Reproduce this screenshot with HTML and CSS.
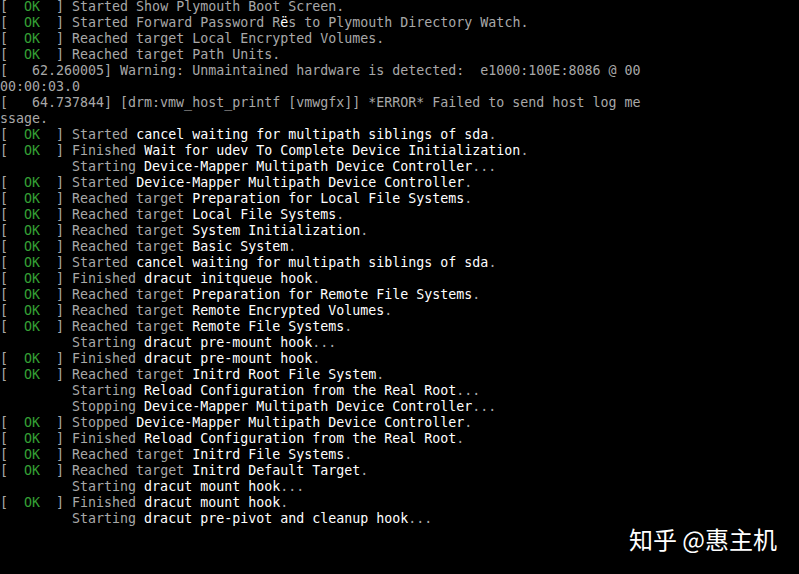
FILE: index.html
```html
<!DOCTYPE html>
<html>
<head>
<meta charset="utf-8">
<link rel="stylesheet" href="styles.css">
</head>
<body>
<div class="console">
<div class="line"><span class="g">[  </span><span class="ok">OK</span><span class="g">  ] Started Show Plymouth Boot Screen.</span></div>
<div class="line"><span class="g">[  </span><span class="ok">OK</span><span class="g">  ] Started Forward Password R</span><span class="w">ë</span><span class="g">s to Plymouth Directory Watch.</span></div>
<div class="line"><span class="g">[  </span><span class="ok">OK</span><span class="g">  ] Reached target Local Encrypted Volumes.</span></div>
<div class="line"><span class="g">[  </span><span class="ok">OK</span><span class="g">  ] Reached target Path Units.</span></div>
<div class="line"><span class="g">[   62.260005] Warning: Unmaintained hardware is detected:  e1000:100E:8086 @ 00</span></div>
<div class="line"><span class="g">00:00:03.0</span></div>
<div class="line"><span class="g">[   64.737844] [drm:vmw_host_printf [vmwgfx]] *ERROR* Failed to send host log me</span></div>
<div class="line"><span class="g">ssage.</span></div>
<div class="line"><span class="g">[  </span><span class="ok">OK</span><span class="g">  ] Started </span><span class="w">cancel waiting for multipath siblings of sda</span><span class="g">.</span></div>
<div class="line"><span class="g">[  </span><span class="ok">OK</span><span class="g">  ] Finished </span><span class="w">Wait for udev To Complete Device Initialization</span><span class="g">.</span></div>
<div class="line"><span class="g">         Starting </span><span class="w">Device-Mapper Multipath Device Controller</span><span class="g">...</span></div>
<div class="line"><span class="g">[  </span><span class="ok">OK</span><span class="g">  ] Started </span><span class="w">Device-Mapper Multipath Device Controller</span><span class="g">.</span></div>
<div class="line"><span class="g">[  </span><span class="ok">OK</span><span class="g">  ] Reached target </span><span class="w">Preparation for Local File Systems</span><span class="g">.</span></div>
<div class="line"><span class="g">[  </span><span class="ok">OK</span><span class="g">  ] Reached target </span><span class="w">Local File Systems</span><span class="g">.</span></div>
<div class="line"><span class="g">[  </span><span class="ok">OK</span><span class="g">  ] Reached target </span><span class="w">System Initialization</span><span class="g">.</span></div>
<div class="line"><span class="g">[  </span><span class="ok">OK</span><span class="g">  ] Reached target </span><span class="w">Basic System</span><span class="g">.</span></div>
<div class="line"><span class="g">[  </span><span class="ok">OK</span><span class="g">  ] Started </span><span class="w">cancel waiting for multipath siblings of sda</span><span class="g">.</span></div>
<div class="line"><span class="g">[  </span><span class="ok">OK</span><span class="g">  ] Finished </span><span class="w">dracut initqueue hook</span><span class="g">.</span></div>
<div class="line"><span class="g">[  </span><span class="ok">OK</span><span class="g">  ] Reached target </span><span class="w">Preparation for Remote File Systems</span><span class="g">.</span></div>
<div class="line"><span class="g">[  </span><span class="ok">OK</span><span class="g">  ] Reached target </span><span class="w">Remote Encrypted Volumes</span><span class="g">.</span></div>
<div class="line"><span class="g">[  </span><span class="ok">OK</span><span class="g">  ] Reached target </span><span class="w">Remote File Systems</span><span class="g">.</span></div>
<div class="line"><span class="g">         Starting </span><span class="w">dracut pre-mount hook</span><span class="g">...</span></div>
<div class="line"><span class="g">[  </span><span class="ok">OK</span><span class="g">  ] Finished </span><span class="w">dracut pre-mount hook</span><span class="g">.</span></div>
<div class="line"><span class="g">[  </span><span class="ok">OK</span><span class="g">  ] Reached target </span><span class="w">Initrd Root File System</span><span class="g">.</span></div>
<div class="line"><span class="g">         Starting </span><span class="w">Reload Configuration from the Real Root</span><span class="g">...</span></div>
<div class="line"><span class="g">         Stopping </span><span class="w">Device-Mapper Multipath Device Controller</span><span class="g">...</span></div>
<div class="line"><span class="g">[  </span><span class="ok">OK</span><span class="g">  ] Stopped </span><span class="w">Device-Mapper Multipath Device Controller</span><span class="g">.</span></div>
<div class="line"><span class="g">[  </span><span class="ok">OK</span><span class="g">  ] Finished </span><span class="w">Reload Configuration from the Real Root</span><span class="g">.</span></div>
<div class="line"><span class="g">[  </span><span class="ok">OK</span><span class="g">  ] Reached target </span><span class="w">Initrd File Systems</span><span class="g">.</span></div>
<div class="line"><span class="g">[  </span><span class="ok">OK</span><span class="g">  ] Reached target </span><span class="w">Initrd Default Target</span><span class="g">.</span></div>
<div class="line"><span class="g">         Starting </span><span class="w">dracut mount hook</span><span class="g">...</span></div>
<div class="line"><span class="g">[  </span><span class="ok">OK</span><span class="g">  ] Finished </span><span class="w">dracut mount hook</span><span class="g">.</span></div>
<div class="line"><span class="g">         Starting </span><span class="w">dracut pre-pivot and cleanup hook</span><span class="g">...</span></div>
</div>
<div class="watermark">知乎 @惠主机</div>
</body>
</html>
```
FILE: styles.css
```css
html, body {
  margin: 0;
  padding: 0;
  background: #000;
  width: 799px;
  height: 574px;
  overflow: hidden;
}
body {
  position: relative;
}
.console {
  margin-top: -1px;
  font-family: "DejaVu Sans Mono", "Liberation Mono", monospace;
  font-size: 13.3px;
  line-height: 16px;
  color: #a8a8a8;
}
.line {
  height: 16px;
  white-space: pre;
}
.g { color: #a8a8a8; }
.w { color: #ffffff; }
.ok { color: #35a035; }
.watermark {
  position: absolute;
  right: 22px;
  top: 525px;
  font-family: "Noto Sans CJK SC", sans-serif;
  font-size: 24px;
  line-height: 28px;
  color: #ffffff;
}
```
